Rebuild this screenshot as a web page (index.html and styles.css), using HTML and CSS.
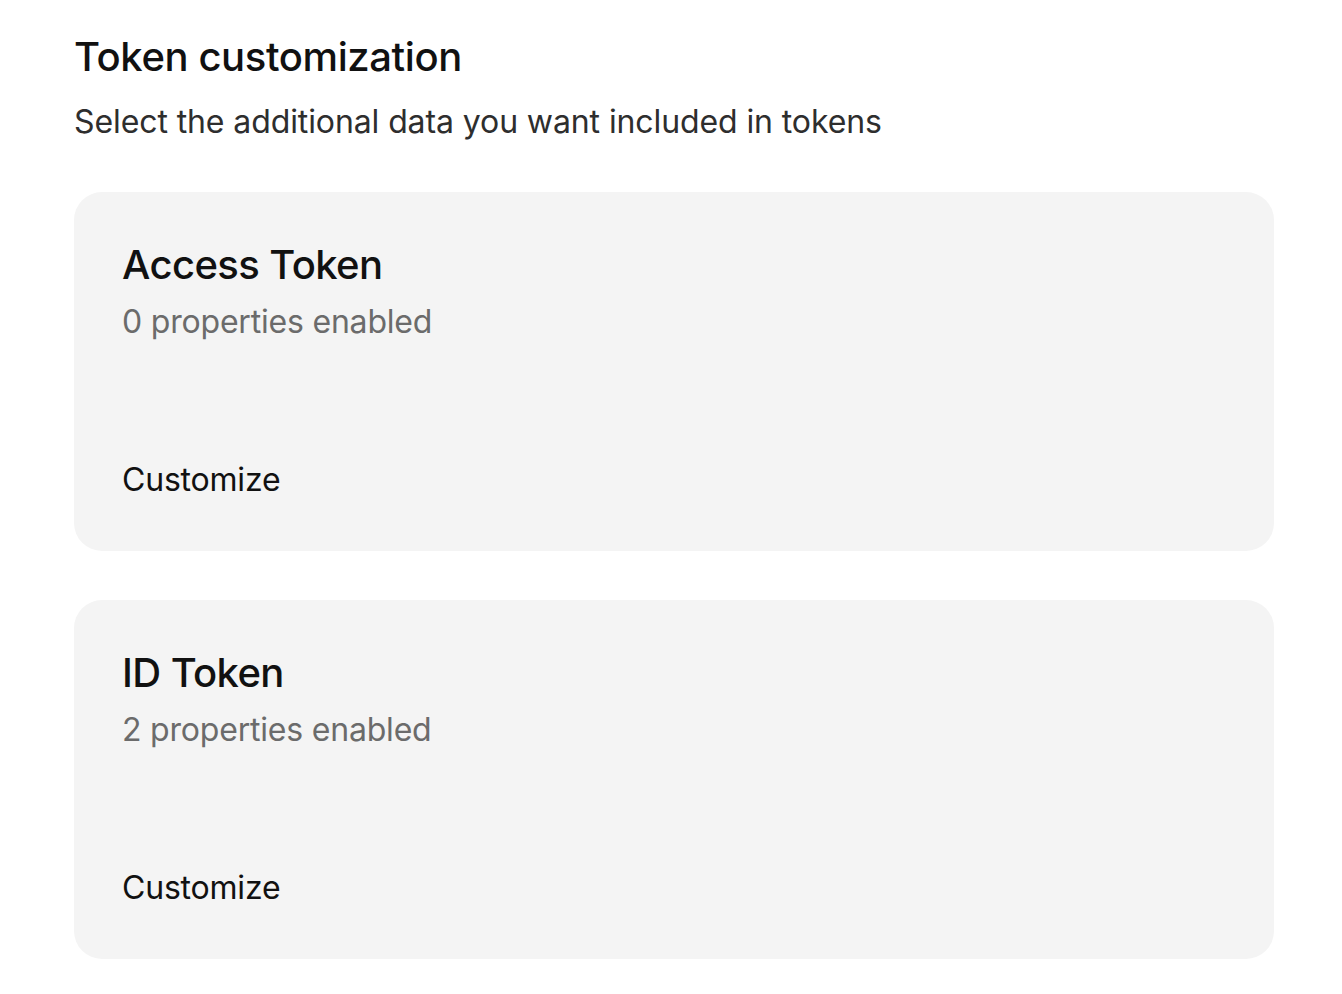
FILE: index.html
```html
<!DOCTYPE html>
<html>
<head>
<meta charset="utf-8">
<link rel="stylesheet" href="styles.css">
</head>
<body>
<main class="page">
  <header class="head">
    <h1 class="title">Token customization</h1>
    <p class="subtitle">Select the additional data you want included in tokens</p>
  </header>
  <section class="cards">
    <div class="card">
      <div class="card-top">
        <h2 class="card-title">Access Token</h2>
        <p class="card-meta">0 properties enabled</p>
      </div>
      <a class="card-link">Customize</a>
    </div>
    <div class="card">
      <div class="card-top">
        <h2 class="card-title">ID Token</h2>
        <p class="card-meta">2 properties enabled</p>
      </div>
      <a class="card-link">Customize</a>
    </div>
  </section>
</main>
</body>
</html>
```
FILE: styles.css
```css
html, body {
  margin: 0;
  padding: 0;
  background: #ffffff;
}
body {
  font-family: Inter, "Noto Sans", sans-serif;
  color: #111111;
}
.page {
  padding: 33px 68px 0 74px;
  display: flex;
  flex-direction: column;
}
.head {
  display: flex;
  flex-direction: column;
}
.title {
  margin: 0;
  font-size: 40px;
  font-weight: 500;
  line-height: 48px;
  letter-spacing: -0.4px;
}
.subtitle {
  margin: 21px 0 0;
  font-size: 32px;
  font-weight: 400;
  line-height: 40px;
  color: #2e2e2e;
  letter-spacing: -0.1px;
}
.cards {
  margin-top: 50px;
  display: flex;
  flex-direction: column;
  gap: 49px;
}
.card {
  background: #f4f4f4;
  border-radius: 28px;
  height: 359px;
  box-sizing: border-box;
  padding: 49px 49px 51px 48px;
  display: flex;
  flex-direction: column;
  justify-content: space-between;
}
.card-top {
  display: flex;
  flex-direction: column;
}
.card-title {
  margin: 0;
  font-size: 40px;
  font-weight: 500;
  line-height: 48px;
  letter-spacing: -0.6px;
}
.card-meta {
  margin: 13px 0 0;
  font-size: 32px;
  line-height: 40px;
  color: #6b6b6b;
  letter-spacing: -0.2px;
}
.card-link {
  font-size: 32px;
  line-height: 40px;
  color: #111111;
  letter-spacing: -0.2px;
}
```
